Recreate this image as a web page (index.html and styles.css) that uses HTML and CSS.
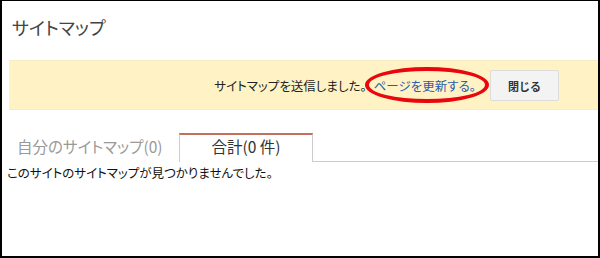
FILE: index.html
```html
<!DOCTYPE html>
<html lang="ja">
<head>
<meta charset="utf-8">
<link rel="stylesheet" href="styles.css">
</head>
<body>
<div class="frame">
  <h1 class="title">サイトマップ</h1>
  <div class="notice">
    <span class="msg">サイトマップを送信しました。</span>
    <span class="linkwrap"><a class="link" href="#">ページを更新する。</a></span>
    <button class="close">閉じる</button>
  </div>
  <div class="tabs">
    <div class="tab">自分のサイトマップ(0)</div>
    <div class="tab active">合計(0 件)</div>
    <div class="tabfill"></div>
  </div>
  <p class="empty">このサイトのサイトマップが見つかりませんでした。</p>
</div>
</body>
</html>
```
FILE: styles.css
```css
html, body {
  margin: 0;
  padding: 0;
  background: #fff;
}
body {
  font-family: "Noto Sans CJK JP", "Liberation Sans", sans-serif;
  font-feature-settings: "palt";
}
.frame {
  box-sizing: border-box;
  width: 600px;
  height: 258px;
  border-style: solid;
  border-color: #000;
  border-width: 1px 2px 2px 2px;
  overflow: hidden;
}
.title {
  margin: 0;
  padding: 13px 0 0 10px;
  height: 59px;
  box-sizing: border-box;
  font-size: 18px;
  font-weight: normal;
  color: #444;
  line-height: 26px;
}
.notice {
  margin: 0 0 0 7px;
  height: 50px;
  box-sizing: border-box;
  background: #fff2c4;
  border-top: 1px solid #f8ecc6;
  border-bottom: 1px solid #f8ecc6;
  display: flex;
  align-items: center;
  justify-content: flex-end;
  padding-right: 39px;
  padding-top: 1px;
  font-size: 12.5px;
  color: #222;
}
.msg {
  margin-right: 7px;
}
.linkwrap {
  position: relative;
  margin-right: 14px;
}
.link {
  color: #2a5bab;
  text-decoration: none;
}
.linkwrap::after {
  content: "";
  position: absolute;
  left: -9px;
  right: -13px;
  top: -9px;
  bottom: -8px;
  border: 4px solid #e8070c;
  border-radius: 50%;
}
.close {
  width: 69px;
  height: 31px;
  box-sizing: border-box;
  background: #f3f3f3;
  border: 1px solid #dcdcdc;
  border-radius: 2px;
  font-family: inherit;
  font-size: 11px;
  font-weight: bold;
  color: #333;
  padding: 0;
}
.tabs {
  display: flex;
  margin-top: 23px;
  height: 29px;
}
.tab {
  box-sizing: border-box;
  font-size: 15.5px;
  color: #9a9a9a;
  padding: 3px 0 0 15px;
  width: 177px;
  line-height: 20px;
}
.tab.active {
  width: 134px;
  padding: 1px 0 0;
  text-align: center;
  color: #333;
  border-top: 2px solid #c0705c;
  border-left: 1px solid #ccc;
  border-right: 1px solid #ccc;
  background: #fff;
}
.tabfill {
  flex: 1;
  border-bottom: 1px solid #ccc;
}
.empty {
  margin: 0;
  padding: 2px 0 0 5px;
  font-size: 12.5px;
  color: #111;
  line-height: 18px;
}
```
